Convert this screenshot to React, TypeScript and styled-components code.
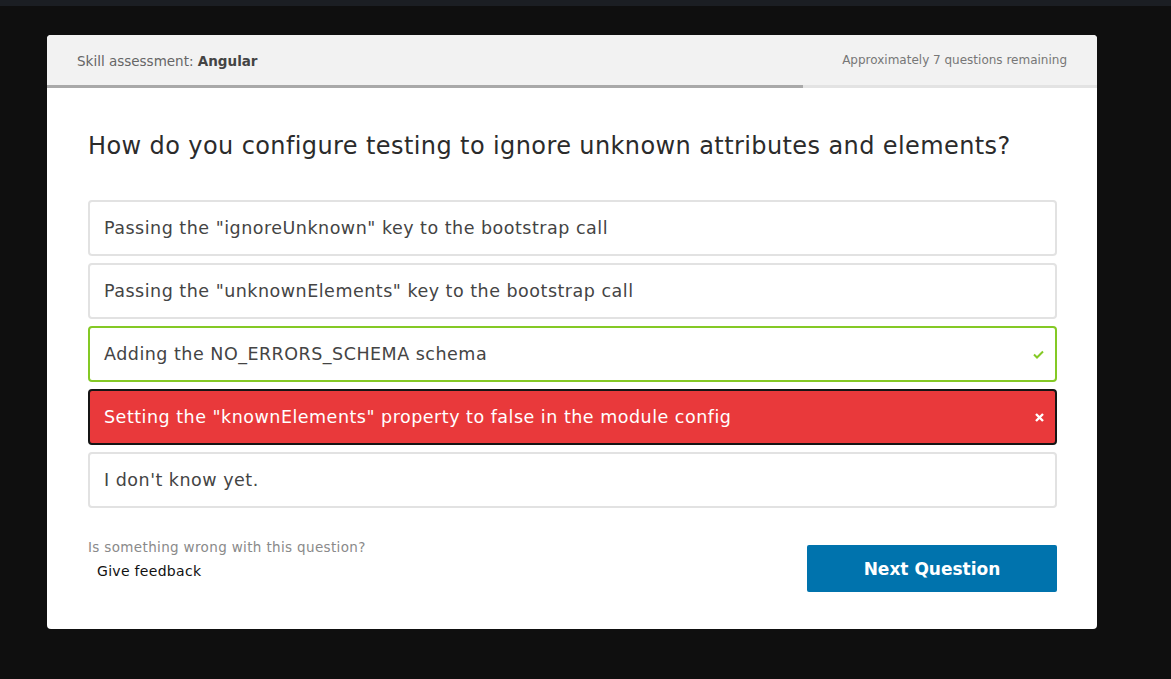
import React from 'react';
import styled, { createGlobalStyle } from 'styled-components';

const GlobalStyle = createGlobalStyle`
  html, body {
    margin: 0;
    padding: 0;
    background: #0f0f0f;
    font-family: 'DejaVu Sans', 'Open Sans', sans-serif;
  }
`;

const TopStrip = styled.div`
  height: 6px;
  background: #1b1e23;
`;

const Page = styled.div`
  padding: 29px 0 0 47px;
`;

const Card = styled.div`
  width: 1050px;
  background: #ffffff;
  border-radius: 4px;
  overflow: hidden;
`;

const Header = styled.div`
  height: 50px;
  padding: 0 30px;
  background: #f2f2f2;
  display: flex;
  align-items: center;
  justify-content: space-between;
`;

const Title = styled.div`
  font-size: 13.5px;
  color: #666;
  padding-top: 1px;

  b {
    font-weight: 600;
    color: #444;
  }
`;

const Remaining = styled.div`
  font-size: 12px;
  color: #777;
`;

const Track = styled.div`
  height: 3px;
  background: #e3e3e3;
`;

const Fill = styled.div`
  height: 100%;
  background: #a9a9a9;
`;

const Body = styled.div`
  padding: 43px 40px 37px 41px;
`;

const Question = styled.h1`
  margin: 0 0 39px;
  font-size: 24px;
  letter-spacing: 0.4px;
  line-height: 30px;
  font-weight: 400;
  color: #2b2b2b;
`;

const Options = styled.div`
  display: flex;
  flex-direction: column;
  gap: 7px;
`;

type OptionState = 'idle' | 'correct' | 'wrong';

const Option = styled.div<{ $state: OptionState }>`
  box-sizing: border-box;
  height: 56px;
  padding: 0 11px 0 14px;
  display: flex;
  align-items: center;
  justify-content: space-between;
  border: 2px solid
    ${({ $state }) =>
      $state === 'correct' ? '#84c925' : $state === 'wrong' ? '#151515' : '#e2e2e2'};
  border-radius: 4px;
  background: ${({ $state }) => ($state === 'wrong' ? '#e9393b' : '#ffffff')};
  color: ${({ $state }) => ($state === 'wrong' ? '#ffffff' : '#444444')};
  font-size: 17.5px;
  letter-spacing: 0.5px;
`;

const Footer = styled.div`
  margin-top: 37px;
  display: flex;
  justify-content: space-between;
  align-items: flex-start;
`;

const Report = styled.div`
  display: flex;
  flex-direction: column;
`;

const ReportText = styled.div`
  font-size: 13.5px;
  letter-spacing: 0.35px;
  color: #8a8a8a;
  line-height: 16px;
  margin-top: -6px;
`;

const FeedbackLink = styled.a`
  margin: 8px 0 0 9px;
  font-size: 14px;
  letter-spacing: 0.3px;
  font-weight: 500;
  color: #111;
  text-decoration: none;
  cursor: pointer;
`;

const NextButton = styled.button`
  width: 250px;
  height: 47px;
  border: none;
  border-radius: 2px;
  background: #0073ad;
  color: #ffffff;
  font-family: inherit;
  font-size: 17px;
  font-weight: 700;
  cursor: pointer;
`;

const CheckIcon = () => (
  <svg width="11" height="9" viewBox="0 0 11 9">
    <path d="M1 4.5 L4 7.5 L10 1.5" fill="none" stroke="#84c925" strokeWidth="2" />
  </svg>
);

const CrossIcon = () => (
  <svg width="9" height="9" viewBox="0 0 9 9">
    <path d="M1 1 L8 8 M8 1 L1 8" fill="none" stroke="#ffffff" strokeWidth="2.4" />
  </svg>
);

const answers: { text: string; state: OptionState }[] = [
  { text: 'Passing the "ignoreUnknown" key to the bootstrap call', state: 'idle' },
  { text: 'Passing the "unknownElements" key to the bootstrap call', state: 'idle' },
  { text: 'Adding the NO_ERRORS_SCHEMA schema', state: 'correct' },
  { text: 'Setting the "knownElements" property to false in the module config', state: 'wrong' },
  { text: "I don't know yet.", state: 'idle' }
];

export const App: React.FC = () => {
  const progress = (803 - 47) / 1050;
  return (
    <>
      <GlobalStyle />
      <TopStrip />
      <Page>
        <Card>
          <Header>
            <Title>
              Skill assessment: <b>Angular</b>
            </Title>
            <Remaining>Approximately 7 questions remaining</Remaining>
          </Header>
          <Track>
            <Fill style={{ width: `${progress * 100}%` }} />
          </Track>
          <Body>
            <Question>How do you configure testing to ignore unknown attributes and elements?</Question>
            <Options>
              {answers.map((a) => (
                <Option key={a.text} $state={a.state}>
                  <span>{a.text}</span>
                  {a.state === 'correct' && <CheckIcon />}
                  {a.state === 'wrong' && <CrossIcon />}
                </Option>
              ))}
            </Options>
            <Footer>
              <Report>
                <ReportText>Is something wrong with this question?</ReportText>
                <FeedbackLink>Give feedback</FeedbackLink>
              </Report>
              <NextButton>Next Question</NextButton>
            </Footer>
          </Body>
        </Card>
      </Page>
    </>
  );
};

export default App;
